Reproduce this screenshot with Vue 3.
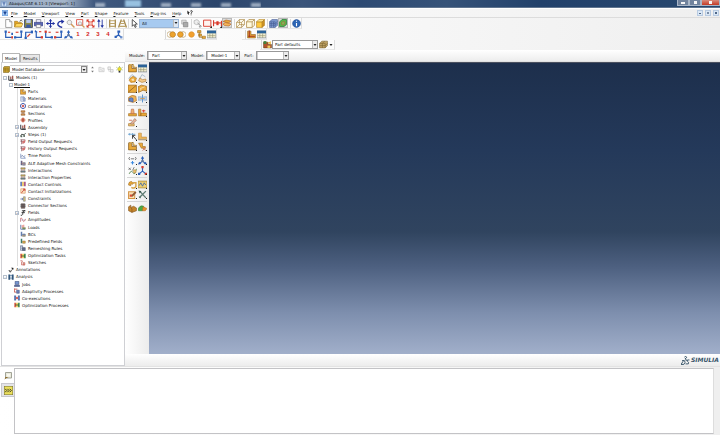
<script setup>
import { h, ref } from 'vue'

const G = '#e9a93a'
const B = '#2b5fb8'
const R = '#d8392b'
const K = '#33373d'
const part = 'M1 2H7V8H15V14H1Z'

// Each shape is [path, fill, stroke, stroke width] on a 16 x 16 grid.
const shapes = {
  app: [['M1 2H15V14H1Z', '#cfe0f3', '#4a78b8', 1], ['M4 4H12V6H9V12H7V6H4Z', '#1a3f8c']],
  menuApp: [['M0 1H16V15H0Z', '#a9cdf5', '#3a7fd0', 1.5], ['M4 4H12V7H10V12H6V7H4Z', '#123a8c']],
  fresh: [['M3 1H10L14 5V15H3Z', '#fff', '#777', 1.2], ['M10 1V5H14', '#ddd', '#777', 1]],
  open: [['M1 4H6L8 6H13V14H1Z', '#e4a424', '#9a6c14', 1], ['M1 14L4 8H16L13 14Z', '#ffd75c', '#a87a1a', 1], ['M10 4Q13 0 15 4', '', '#444', 1.4]],
  save: [['M1 1H15V15H1Z', '#8e8b48', '#3b4a72', 1.6], ['M4 1H12V7H4Z', '#b9c8f0'], ['M4 10H12V15H4Z', '#3a5aa8']],
  print: [['M4 1H12V7H4Z', '#eef', '#556', 1], ['M0 6H16V12H0Z', '#5c6ab5', '#343c80', 1], ['M4 10H12V15H4Z', '#fff', '#556', 1]],
  move: [['M8 1V15M1 8H15', '', '#2232a0', 1.8], ['M8 0L11 4H5ZM8 16L5 12H11ZM0 8L4 5V11ZM16 8L12 11V5Z', '#2232a0']],
  rotate: [['M11 15Q1 12 4 7Q6 3 12 5', '', '#2232a0', 2.4], ['M9 1L15 4L10 9Z', '#2232a0']],
  lens: [['M6 2A4 4 0 1 0 6.1 2', '#eee', '#999', 1.4], ['M9 9L15 15', '', '#d09a5a', 2.6]],
  lensBox: [['M1 1H12V11H1Z', '', R, 1.4], ['M7 5A3 3 0 1 0 7.1 5', '#eee', '#999', 1.2], ['M10 10L15 15', '', '#d09a5a', 2.4]],
  fit: [['M1 1H6L1 6ZM15 1V6L10 1ZM1 15V10L6 15ZM15 15H10L15 10Z', R], ['M2 2L14 14M14 2L2 14', '', R, 2], ['M5 5H11V11H5Z', '#f8c9c0', R, 1]],
  updown: [['M5 3V15M11 1V13', '', '#2232a0', 1.6], ['M5 0L8 5H2ZM11 16L8 11H14Z', '#2232a0']],
  ortho: [['M3 1V15M13 1V15', '', '#a58a50', 2.4], ['M3 3H13M3 8H13M3 13H13', '', '#bda46c', 2]],
  persp: [['M6 1L1 15M10 1L15 15', '', '#a58a50', 2.4], ['M5 4H11M4 8H12M2 13H14', '', '#bda46c', 2]],
  cursor: [['M4 1L13 9H9L11 14L9 15L7 10L4 13Z', '#fff', '#222', 1.3]],
  stack: [['M3 2H11V9H3Z', '#ddd', '#999', 1], ['M6 6H14V14H6Z', '#aaa', '#777', 1]],
  ghost: [['M2 3L7 1L11 4V9L6 10L2 8Z', '#eee', '#999', 1], ['M8 7L15 13H11L13 16', '#ddd', '#777', 1.1]],
  redBox: [['M1 2H14V13H1Z', '#fff3f0', R, 1.6], ['M12 16H16V12Z', '#222']],
  redArrows: [['M1 2V13M15 3V13', '', R, 2], ['M2 7H14', '', R, 2], ['M8 4V11', '', R, 4], ['M12 16H16V12Z', '#222']],
  layers: [['M0 5L6 2L16 4L11 8Z', G, '#b4601c', 1.2], ['M0 10L5 7L16 10L12 14L3 13Z', '#f4b45a', '#b4601c', 1.2]],
  wire: [['M1 6H10V15H1ZM6 1H15V10H6ZM1 6L6 1M10 6L15 1M10 15L15 10M1 15L6 10', '#fffdf2', '#a37b30', 1.1]],
  hidden: [['M1 5H11V15H1ZM1 5L5 1H15L11 5M15 1V11L11 15', '#fffae0', '#a37b30', 1.2]],
  solid: [['M1 5H11V15H1Z', '#ffca42', '#a97716', 1], ['M1 5L5 1H15L11 5Z', '#ffe795', '#a97716', 1], ['M15 1V11L11 15V5Z', '#cf9220', '#a97716', 1]],
  blueCube: [['M1 5L5 1H15V11L11 15H1Z', '#7f9ad0', '#41578e', 1], ['M1 8H11L15 4M1 11H11L15 7M4 5V15M8 5V15M1 5H11V15', '', '#41578e', 1]],
  greenCube: [['M1 6L6 1H15V11L10 15H1Z', '#55b64b', '#227a35', 1.4], ['M5 7Q8 4 12 6Q13 11 8 12Q4 12 5 7', '#7bbd54', '#b0583a', 1.2]],
  info: [['M8 1A7 7 0 1 0 8.1 1', '#2d66b5', '#1a4890', 1], ['M7 7H9V13H7ZM7 3H9V5H7Z', '#fff']],
  c1: [['M3 3V13H14', '', B, 2.2], ['M1 1H5V5H1ZM13 5H16V9H13Z', B], ['M7 4H11', '', R, 2], ['M13 11H16V15H13Z', R]],
  c2: [['M2 13H13V4', '', B, 2.2], ['M0 11H4V15H0ZM11 1H15V5H11Z', B], ['M3 4H8', '', R, 2]],
  c3: [['M3 15V4H14', '', B, 2.2], ['M1 12H5V16H1Z', B], ['M12 1H16V6H12Z', B], ['M6 12L11 7', '', R, 2]],
  c4: [['M4 3V13H15', '', B, 2.2], ['M2 0L7 4H1Z', B], ['M9 3H13', '', R, 2], ['M12 11H16V15H12Z', R]],
  c5: [['M3 3V13H14', '', B, 2.2], ['M1 1H5V5H1Z', R], ['M8 4H12', '', R, 2], ['M12 11H16V15H12Z', B]],
  c6: [['M2 13H13V4', '', B, 2.2], ['M0 11H4V15H0Z', R], ['M3 4H8', '', R, 2], ['M11 1H15V5H11Z', B]],
  tri: [['M8 2V9L2 14M8 9L14 14', '', B, 2], ['M8 0L11 5H5ZM0 15L2 10L6 14ZM16 15L10 14L14 10Z', B], ['M6 7H10V11H6Z', '#63799d']],
  triRed: [['M8 2V9L2 14M8 9L14 14', '', B, 2], ['M6 0H10V4H6ZM12 12H16V16H12Z', R], ['M0 12H4V16H0Z', B]],
  triSave: [['M8 4V9L3 12M8 9L13 13', '', B, 2.4], ['M6 1H11V5H6ZM1 10H5V14H1Z', B], ['M11 11H15V15H11Z', '#6a8fcc']],
  boolA: [['M5 3A5 5 0 1 0 5.1 3', '#fff', '#a37b30', 1], ['M10 3A5 5 0 1 0 10.1 3', '#eda32e', '#a86c17', 1]],
  boolB: [['M11 3A5 5 0 1 0 11.1 3', '#fff', '#a37b30', 1], ['M6 3A5 5 0 1 0 6.1 3', '#eda32e', '#a86c17', 1]],
  disc: [['M8 3A5 5 0 1 0 8.1 3', '#f2a02e', '#d58a26', 1]],
  tree: [['M1 1H7V5H1ZM3 7H8V11H3ZM9 11H15V15H9Z', G, '#9a6b1a', 1], ['M4 4V13H10', '', '#9a6b1a', 1.2]],
  table: [['M0 2H16V14H0Z', '#f4efcf', '#5b6a7e', 1], ['M0 1H16V6H0Z', '#2c6398'], ['M1 10H15M5 6V14M10 6V14', '', '#8d8c6c', 1]],
  partRed: [[part, G, '#8a5a18', 1], ['M4 1V13M2 11H14', '', '#a23522', 2]],
  palette: [['M1 4H9V8H15V14H1Z', '#b2542a', '#65401a', 1], ['M1 2H6V7H1Z', '#42823c'], ['M8 5L14 2V8Z', '#edbf49'], ['M8 10H13V14H8Z', '#f0ce60']],
  cubes: [['M1 6L5 2H15V10L11 14H1Z', '#bfa265', '#75602c', 1], ['M1 6H11V14M6 6V14M1 10H11L15 6M6 6L10 2', '', '#75602c', 1]],
  db: [['M1 4L3 1H15V12L13 15H1Z', '#caa22f', '#6d5713', 1.2], ['M1 5H12V14M1 9H12M5 5V14', '', '#7a6118', 1]],
  spin: [['M8 1L11 5H5ZM8 15L5 11H11Z', '#777']],
  folder: [['M2 3H7L9 5H14V13H2Z', '#eee', '#bbb', 1.2], ['M5 7L11 11', '', '#bbb', 1]],
  copy: [['M2 2H8V8H2ZM8 8H14V14H8Z', '#eee', '#b5b5b5', 1.2], ['M4 8V12H8', '', '#b5b5b5', 1]],
  bulb: [['M8 3A4 4 0 1 0 8.1 3', '#f1e32a', '#8b8d1a', 1], ['M6 11H10V15H6Z', '#333'], ['M1 3L3 4M15 3L13 4M8 0V2M1 9H3M13 9H15', '', '#668c30', 1.4]],
  models: [['M2 2V14H15', '', K, 2.6], ['M6 4H9V11H6ZM11 2H14V11H11Z', '#94433a'], ['M5 12H15V15H5Z', '#333']],
  part: [[part, G, '#7d531a', 1.2], ['M1 2L3 0H9L7 2M9 0V6H16L15 8', '#f7d37c', '#7d531a', 1]],
  material: [['M2 2H10V14H2Z', '#eef2ff', '#5c6d9a', 1.2], ['M4 4H8M4 7H8M4 10H8', '', '#5577b5', 1], ['M10 2L14 6V14H10Z', '#a2b4da', '#5c6d9a', 1]],
  calib: [['M8 1A7 7 0 1 0 8.1 1', '#d7e2fa', '#2147a3', 2], ['M4 4L12 12M12 4L4 12', '', R, 2]],
  section: [['M3 2H13V6H3ZM3 10H13V14H3Z', '#d59d55', '#8a4c25', 1.4], ['M8 6V10', '', '#8a4c25', 2]],
  profile: [['M8 1V15M1 8H15', '', '#d1745f', 2.4], ['M4 3H12V13H4Z', '#d8765f'], ['M4 8H12M8 3V13', '', '#8b3020', 1.2]],
  steps: [['M1 12Q5 2 8 7Q10 10 15 3', '', '#3a443d', 2.4], ['M2 9H6V14H2ZM9 8H13V13H9Z', '#5a6a5e']],
  output: [['M1 2H14M1 6H7M4 2V14', '', '#75434a', 1.6], ['M7 6L14 4L12 10L7 12Z', '#ed8581', '#9a3434', 1.2]],
  time: [['M2 2V14H15', '', '#5870a8', 1.6], ['M3 10L6 6L9 10L14 7', '', '#334a87', 1.4], ['M11 10H14V14H11Z', '#9aa9d1']],
  ale: [['M2 2H6V14H2Z', '#5a6890'], ['M7 7H14V14H7Z', '#96a0bd', '#444', 1], ['M3 5H8M2 10H14', '', '#bf5547', 1]],
  inter: [['M2 2H14V6H2Z', '#c3bf59', '#777', 1], ['M2 10H14V14H2Z', '#5d97a0', '#555', 1], ['M5 1V15M11 1V15', '', '#a8504a', 1.2]],
  contact: [['M1 2H5V14H1Z', '#516bae'], ['M6 2H10V14H6Z', '#e6b746'], ['M11 2H15V14H11Z', '#9c3f7a']],
  contactInit: [['M2 2H14V14H2Z', '#f9e6c3', '#d06c2e', 1.2], ['M4 13L12 3M8 3H13V8', '', '#c62e28', 2]],
  constraint: [['M1 8H8M6 5L9 8L6 11', '', '#2f478b', 1.8], ['M9 2H14V14H9Z', '#d8c57e', '#5f6a76', 1.2]],
  connector: [['M3 2H13V14H3Z', '#9c7468', '#444', 1.2], ['M1 5H15M1 9H15M6 2V14M10 2V14', '', '#424850', 1.5]],
  field: [['M14 2Q9 0 8 6L7 12Q6 15 2 14M4 7H13M5 2H14', '', '#222', 2.2]],
  amp: [['M1 13V4Q4 0 6 6T10 12T15 5', '', '#c34444', 1.6], ['M1 8H15', '', '#6b80b7', 1]],
  load: [['M2 2V14H14', '', '#42619c', 2], ['M6 3V10M10 2V10', '', R, 1.6], ['M6 9H15V14H6Z', '#7a8a5c']],
  bc: [['M2 2H6V14H2Z', '#657fae'], ['M7 8H14V14H7Z', '#8b98b6', '#43557c', 1.2], ['M5 13H15', '', '#e0a63d', 1.5]],
  predef: [['M2 2H6V14H2Z', '#3f7d68'], ['M7 8H14V14H7Z', '#e1ad4e', '#796130', 1.2]],
  remesh: [['M1 2H7V14H1Z', '#dfe4f1', '#414d70', 1.4], ['M7 7H14V15H7Z', '#66728f', '#303850', 1.2], ['M3 5H6M3 9H6', '', '#394b80', 1]],
  opt: [['M1 2H5V14H1Z', '#d64831'], ['M6 2H10V14H6Z', '#ebc13c'], ['M11 2H15V14H11Z', '#318343'], ['M3 8H13', '', '#20462c', 2]],
  sketch: [['M1 2H6V6H4V13H13', '', '#b93d34', 1.5], ['M8 7H13V13H8Z', '#eba798', '#a93d34', 1.2]],
  note: [['M2 8L6 14L14 3', '', '#222', 1.6], ['M8 2H14V8Z', '#222'], ['M3 9L7 9L6 14Z', '#222']],
  analysis: [['M1 1H6V15H1ZM10 1H15V15H10Z', '#31567c'], ['M6 4H10M6 11H10', '', '#3c6a96', 2]],
  job: [['M3 1H13V9H3Z', '#7696d2', '#30406e', 1.4], ['M1 11H15V15H1Z', '#52649b', '#30406e', 1]],
  adapt: [['M1 1V11H6M2 3H9', '', '#bd392d', 2], ['M7 6H14V14H7Z', '#7183b7', '#384a7d', 1.4]],
  coex: [['M1 2H5V14H1ZM11 2H15V14H11Z', '#5475ba', '#32508c', 1], ['M5 5L11 11M11 5L5 11', '', R, 2]],
  boxOut: [['M4 7L9 4L15 7L13 14L5 15L2 11Z', G, '#a96c20', 1], ['M1 8L7 1L14 6', '', '#9db0c2', 1.4], ['M6 9L10 8L11 12L7 12Z', '#fbe3b4']],
  arm: [['M3 9L7 1L13 5', '', '#9db0c2', 1.4], ['M3 7L8 10L14 9V13L7 15L1 12Z', '#f4c987', '#ad7a38', 1.1]],
  solidCut: [['M0 2H15V15H0Z', G, '#9a641b', 1.2], ['M1 14L14 3', '', '#80501b', 1.2]],
  blend: [['M0 5L6 2L15 4L16 13L9 11L1 15Z', G, '#9a641b', 1.2], ['M4 8L12 5M5 12V8', '', '#fbe6bd', 1.4]],
  round: [['M1 6Q7 0 14 4L15 12L9 15L1 13Z', '#f0b45a', '#a16722', 1], ['M2 8Q6 5 9 8V14L2 12Z', '#6786c8', '#35549c', 1]],
  mirror: [['M8 1V15', '', '#3a80c4', 1.4], ['M0 5H6V11H0ZM10 5H16V11H10Z', '#b9d2ee', '#7f9fc4', 1], ['M4 8H12', '', '#d99a4a', 1.4]],
  stamp: [['M1 10H15V14H1Z', G, '#9a641b', 1], ['M6 2H10L11 10H5Z', '#efb172', '#b45a36', 1]],
  stampTo: [['M1 2H5V14H1ZM5 9H15V14H5Z', G, '#9a641b', 1], ['M7 5H13M10 3V8', '', R, 1.6]],
  pencil: [['M1 10H11V14H1Z', '#f0c67a', '#9a641b', 1], ['M4 10L12 1L15 4L8 11Z', '#e6b49c', '#8a6a50', 1], ['M2 4H7', '', '#c45a44', 1.4]],
  datum: [['M0 4H13M3 2V6M8 2V6', '', '#5e9bd0', 1.4], ['M8 6L15 14M8 6V12M8 6H13', '', '#333', 1.6]],
  partLine: [['M1 2H6V9H15V14H1Z', '#f0b95a', '#b98238', 1], ['M1 13H15', '', '#8a9ab0', 1.2]],
  partX: [['M1 2H8V8H13V11H6Z', G, '#9a641b', 1], ['M8 10L14 15M14 10L8 15', '', '#c8705a', 1.6]],
  dims: [['M3 2Q0 4 3 7M13 2Q16 4 13 7M5 5H11', '', '#555', 1.4], ['M8 9V15M5 12H11', '', '#3c8ae0', 1.8]],
  xyz: [['M1 3L5 7M5 3L1 7M11 2L8 8', '', '#555', 1.3], ['M2 14Q6 6 9 12T15 5', '', '#52824c', 1.5], ['M10 7H14V12H10Z', '#f0c878', '#b98a38', 1]],
  twist: [['M1 9Q1 2 7 3L10 6L7 8Q4 5 5 10Z', G, '#9a641b', 1], ['M9 5H14V12Q11 16 6 13', '', '#d8a44a', 2.6]],
  wave: [['M0 2H16V14H0Z', '#efd073', '#a17a25', 1.2], ['M2 10L5 5L8 11L11 5L14 9', '', '#4065a5', 1.5]],
  repair: [['M1 3H12V15H1Z', '#f9e2b6', '#d39547', 1.8], ['M5 10L13 2L15 5L8 12Z', '#8f5a34'], ['M3 8H7V12H3Z', '#d84a34']],
  tools: [['M3 2L14 14M14 2L3 13', '', '#5e7b73', 2.4], ['M1 1L6 2L3 6ZM1 12L5 12L4 15Z', '#34564e']],
  bricks: [['M1 5L5 2V6L10 4L15 7V12L7 15L1 12Z', '#c6852c', '#7b511c', 1], ['M5 6L7 9V15', '', '#7b511c', 1]],
  turtle: [['M0 10Q3 1 10 4L11 9L8 12H1Z', '#4da844', '#357b31', 1], ['M9 5L16 8L13 12H8Z', '#e6942e', '#b76b1e', 1]],
  msg: [['M3 1H15V12H3Z', '#e9e9dc', '#999b8c', 1.8], ['M6 4H12V9H6Z', '#f9f8ec'], ['M1 15L3 10L9 10L5 12Z', '#8a6723']],
  cli: [['M0 0H16V16H0Z', '#ece05b', '#6d6a3b', 1.8], ['M2 5L5 8L2 11M6 5L9 8L6 11M10 5L13 8L10 11', '', '#222', 1.6]],
  helpArrow: [['M1 1L8 8H5V13L1 9Z', '#222'], ['M9 3Q14 0 14 4Q14 6 11 8V10M11 12V14', '', '#222', 2.4]],
  ds: [['M2 8H6Q9 11 5 15H0L4 9M6 2Q9 -1 10 2Q10 4 7 5Q11 6 9 9M15 7Q10 6 11 9Q15 11 13 14H8', '', '#39556a', 1.7]],
  down: [['M2 4H14L8 12Z', '#222']],
}

const Glyph = (p) =>
  h('svg', { viewBox: '0 0 16 16', class: 'glyph', 'aria-hidden': 'true' },
    shapes[p.name].map(([d, fill, stroke, w]) =>
      h('path', { d, fill: fill || 'none', stroke: stroke || 'none', 'stroke-width': w || 0 })))
Glyph.props = ['name']

const menus = ['File', 'Model', 'Viewport', 'View', 'Part', 'Shape', 'Feature', 'Tools', 'Plug-ins', 'Help']
const viewTools = [['fresh', 'open', 'save', 'print'], ['move', 'rotate', 'lens', 'lensBox', 'fit', 'updown'], ['ortho', 'persp']]
const pickTools = [['ghost', 'redBox', 'redArrows', 'layers'], ['wire', 'hidden', 'solid'], ['blueCube', 'greenCube'], ['info']]
const toolbox = [
  ['part', 'table', 'boxOut', 'arm', 'solidCut', 'blend', 'round', 'mirror'],
  ['stamp', 'stampTo', 'pencil'],
  ['datum', 'partLine', 'part', 'partX'],
  ['dims', 'tri', 'xyz', 'triRed'],
  ['twist', 'wave', 'repair', 'tools'],
  ['bricks', 'turtle'],
]
// [depth, icon, label, expander]
const rows = [
  [0, 'models', 'Models (1)', '-'], [1, '', 'Model-1', '-'],
  [2, 'part', 'Parts'], [2, 'material', 'Materials'], [2, 'calib', 'Calibrations'], [2, 'section', 'Sections'],
  [2, 'profile', 'Profiles'], [2, 'models', 'Assembly', '+'], [2, 'steps', 'Steps (1)', '+'],
  [2, 'output', 'Field Output Requests'], [2, 'output', 'History Output Requests'], [2, 'time', 'Time Points'],
  [2, 'ale', 'ALE Adaptive Mesh Constraints'], [2, 'inter', 'Interactions'], [2, 'inter', 'Interaction Properties'],
  [2, 'contact', 'Contact Controls'], [2, 'contactInit', 'Contact Initializations'], [2, 'constraint', 'Constraints'],
  [2, 'connector', 'Connector Sections'], [2, 'field', 'Fields', '+'], [2, 'amp', 'Amplitudes'], [2, 'load', 'Loads'],
  [2, 'bc', 'BCs'], [2, 'predef', 'Predefined Fields'], [2, 'remesh', 'Remeshing Rules'], [2, 'opt', 'Optimization Tasks'],
  [2, 'sketch', 'Sketches'], [0, 'note', 'Annotations'], [0, 'analysis', 'Analysis', '-'],
  [3, 'job', 'Jobs'], [3, 'adapt', 'Adaptivity Processes'], [3, 'coex', 'Co-executions'], [3, 'opt', 'Optimization Processes'],
]
const tab = ref('Model')
const log = ref('')
</script>

<template>
  <div class="window">
    <header class="title">
      <Glyph name="app" />
      <h1>Abaqus/CAE 6.11-3 [Viewport: 1]</h1>
      <div class="smears"><i></i><i class="wide"></i><i></i><i></i><i></i><i></i></div>
      <div class="caption">
        <button class="min" aria-label="Minimize"><i></i></button>
        <button class="max" aria-label="Maximize"><i></i></button>
        <button class="close" aria-label="Close"><i></i></button>
      </div>
    </header>

    <nav class="menu">
      <Glyph name="menuApp" />
      <a v-for="m in menus" :key="m" href="#"><u>{{ m[0] }}</u>{{ m.slice(1) }}</a>
      <Glyph name="helpArrow" />
      <div class="child">
        <button aria-label="Minimize viewport"><i class="low"></i></button>
        <button aria-label="Restore viewport"><i class="big"></i></button>
        <button aria-label="Close viewport"><i></i></button>
      </div>
    </nav>

    <div class="bars">
      <div class="bar">
        <div class="strip">
          <template v-for="(g, i) in viewTools" :key="i">
            <button v-for="n in g" :key="n" class="tool" :aria-label="n"><Glyph :name="n" /></button>
            <i class="sep"></i>
          </template>
          <button class="tool" aria-label="Select"><Glyph name="cursor" /></button>
          <span class="pick filter"><select aria-label="Selection filter"><option>All</option></select><b><Glyph name="down" /></b></span>
          <button class="tool" aria-label="Filter options"><Glyph name="stack" /></button>
          <template v-for="(g, i) in pickTools" :key="'p' + i">
            <i class="sep wide"></i>
            <button v-for="n in g" :key="n" class="tool" :class="{ on: n === 'layers' || n === 'greenCube' }" :aria-label="n"><Glyph :name="n" /></button>
          </template>
        </div>
      </div>
      <div class="bar">
        <div class="strip first">
          <button v-for="n in ['c1', 'c2', 'c3', 'c4', 'c5', 'c6', 'tri']" :key="n" class="tool" :aria-label="n"><Glyph :name="n" /></button>
          <button v-for="n in 4" :key="n" class="tool num">{{ n }}</button>
          <button class="tool" aria-label="Save view"><Glyph name="triSave" /></button>
        </div>
        <div class="strip second">
          <i class="sep"></i>
          <button v-for="n in ['boolA', 'boolB', 'disc', 'tree', 'table']" :key="n" class="tool" :aria-label="n"><Glyph :name="n" /></button>
        </div>
        <div class="strip third">
          <i class="sep"></i>
          <button v-for="n in ['partRed', 'table']" :key="n" class="tool" :aria-label="n"><Glyph :name="n" /></button>
        </div>
      </div>
      <div class="bar">
        <div class="strip colors">
          <i class="sep"></i>
          <button class="tool" aria-label="Color code"><Glyph name="palette" /></button>
          <span class="pick defaults"><select aria-label="Color mapping"><option>Part defaults</option></select><b><Glyph name="down" /></b></span>
          <button class="tool" aria-label="Translucency"><Glyph name="cubes" /></button>
          <button class="tool slim" aria-label="More"><Glyph name="down" /></button>
        </div>
      </div>
    </div>

    <main class="work">
      <aside class="side">
        <div class="tabs" role="tablist">
          <button v-for="t in ['Model', 'Results']" :key="t" role="tab" :class="{ active: tab === t }" @click="tab = t">{{ t }}</button>
        </div>
        <div class="panel">
          <div class="source">
            <Glyph name="db" />
            <span class="pick"><select aria-label="Tree source"><option>Model Database</option></select><b><Glyph name="down" /></b></span>
            <button v-for="n in ['spin', 'folder', 'copy', 'bulb']" :key="n" class="tool" :aria-label="n"><Glyph :name="n" /></button>
          </div>
          <ul class="tree">
            <li v-for="r in rows" :key="r[2]" :class="'d' + r[0]">
              <span class="exp" :class="{ box: r[3] }">{{ r[3] }}</span>
              <Glyph v-if="r[1]" :name="r[1]" />
              <span :class="{ current: !r[1] }">{{ r[2] }}</span>
            </li>
          </ul>
        </div>
      </aside>

      <section class="stage">
        <div class="context">
          <label for="module">Module:</label>
          <span class="pick module"><select id="module"><option>Part</option></select><b><Glyph name="down" /></b></span>
          <label for="model">Model:</label>
          <span class="pick model"><select id="model"><option>Model-1</option></select><b><Glyph name="down" /></b></span>
          <label for="part">Part:</label>
          <span class="pick partname"><select id="part"><option></option></select><b><Glyph name="down" /></b></span>
        </div>
        <div class="canvas">
          <div class="toolbox">
            <div v-for="(g, i) in toolbox" :key="i" class="group">
              <button v-for="(n, k) in g" :key="k" class="tool" :class="{ more: i + k > 1 && i < 5 }" :aria-label="n"><Glyph :name="n" /></button>
            </div>
          </div>
          <div class="viewport"></div>
        </div>
        <footer class="brand"><Glyph name="ds" /><span>SIMULIA</span></footer>
      </section>
    </main>

    <section class="console">
      <div class="modes">
        <button aria-label="Message area"><Glyph name="msg" /></button>
        <button class="lit" aria-label="Command line"><Glyph name="cli" /></button>
      </div>
      <textarea v-model="log" aria-label="Messages" readonly></textarea>
      <div class="grip"></div>
    </section>
  </div>
</template>

<style>
body { background: #f0f0f0; overflow: hidden; }
</style>

<style scoped>
* { box-sizing: border-box; }
.window {
  display: flex; flex-direction: column; height: 100vh;
  font: 4px/7px "DejaVu Sans", sans-serif; color: #111;
  background: linear-gradient(90deg, #fff, #fbfbfb 30%, #efefef);
}
button, select, textarea { font: inherit; color: inherit; margin: 0; padding: 0; border: 0; border-radius: 0; background: none; }
.glyph { display: block; width: 8px; height: 8px; flex: none; }

.title {
  display: flex; align-items: center; gap: 2px; height: 8px; padding-left: 1px; flex: none;
  background: linear-gradient(90deg, #9aaec9 0, #a4b5ca 9%, #415a80 13%, #2b456b 30%, #3b557b 42%, #2d4a73 50%, #365379 62%, #22416b 75%, #28486f 100%);
  border-bottom: 1px solid #60758f;
}
.title .glyph { width: 6px; height: 6px; }
.title h1 { margin: 0; font-size: 4px; font-weight: 400; line-height: 7px; width: 84px; white-space: nowrap; }
.smears { display: flex; align-items: flex-end; gap: 20px; height: 7px; overflow: hidden; }
.smears i { width: 10px; height: 4px; background: #e4edf5; opacity: .6; filter: blur(1px); }
.smears .wide { width: 16px; height: 7px; background: #a9d5f3; opacity: .85; }
.caption { display: flex; align-self: flex-start; margin-left: auto; height: 6px; }
.caption button { display: grid; place-items: center; width: 12px; height: 6px; border: 1px solid #a9b6c7; border-top: 0; background: #71839d; }
.caption .close { width: 19px; background: linear-gradient(#d98b7c, #c43a25); }
.caption i { width: 4px; height: 2px; background: #f6f6f6; }
.caption .max i { width: 3px; height: 3px; }
.caption .close i { width: 3px; height: 3px; }

.menu { display: flex; align-items: center; height: 10px; flex: none; padding: 0 1px 0 2px; border-bottom: 1px solid #dcdcdc; border-top: 1px solid #fff; }
.menu a { color: inherit; text-decoration: none; margin-right: 6px; }
.menu > .glyph { width: 6px; height: 6px; margin-right: 3px; }
.child { display: flex; gap: 2px; margin-left: auto; }
.child button { display: grid; place-items: center; width: 6px; height: 6px; border: 1px solid #b8cbe2; background: #dbe8f6; }
.child i { width: 2px; height: 2px; background: #4f6787; }
.child .low { height: 1px; }
.child .big { background: #7d8fa8; }

.bars { flex: none; }
.bar { display: flex; height: 11px; }
.bar:last-child { height: 10px; }
.strip { display: flex; align-items: center; background: #fcfcfc; border-right: 1px solid #dedede; border-bottom: 1px solid #e6e6e6; padding-left: 3px; }
.second { margin-left: 40px; padding-left: 0; }
.third { margin-left: 25px; padding-left: 2px; }
.colors { margin-left: 260px; padding-left: 0; }
.tool { display: grid; place-items: center; width: 10px; height: 10px; flex: none; position: relative; }
.strip .tool .glyph { width: 9px; height: 9px; }
.tool.on { background: #dcdcdc; border: 1px solid #b9b9b9; }
.strip .tool.on .glyph { width: 8px; height: 8px; }
.tool.slim { width: 6px; }
.strip .slim .glyph { width: 4px; height: 4px; }
.num { font: bold 6px/8px "Liberation Sans", sans-serif; color: #d4261c; }
.sep { width: 2px; height: 9px; border-right: 1px solid #d8d8d8; flex: none; }
.sep.wide { width: 3px; }

.pick { display: grid; grid-template-columns: 1fr 5px; height: 9px; border: 1px solid #999; background: #fff; min-width: 0; }
.pick select { grid-area: 1 / 1 / 2 / 3; appearance: none; width: 100%; height: 7px; line-height: 7px; padding-left: 2px; outline: none; }
.pick b { grid-area: 1 / 2; display: grid; place-items: center; pointer-events: none; background: #ececec; border-left: 1px solid #bbb; }
.pick .glyph { width: 4px; height: 4px; }
.filter { width: 40px; background: #a7caf0; border-color: #9bb6d6; }
.filter b { background: #dde7f3; }
.defaults { width: 46px; }

.work { display: flex; flex: 1; min-height: 0; }
.side { display: flex; flex-direction: column; width: 125px; flex: none; padding-top: 3px; }
.tabs { display: flex; align-items: flex-end; height: 9px; padding-left: 2px; flex: none; }
.tabs button { height: 8px; padding: 0 2px; border: 1px solid #b5b5b5; border-bottom: 0; background: #e8e8e8; line-height: 7px; }
.tabs .active { height: 9px; background: #fff; }
.panel { flex: 1; display: flex; flex-direction: column; min-height: 0; margin-left: 1px; border: 1px solid #cfd0d4; background: #fff; }
.source { display: flex; align-items: center; height: 11px; flex: none; padding: 1px 0 0 1px; }
.source .pick { flex: 1; grid-template-columns: 1fr 6px; border-color: #ccc; border-left: 0; height: 8px; }
.source .pick b { border: 1px solid #888; }
.source .glyph { width: 7px; height: 7px; }
.source .pick .glyph { width: 4px; height: 4px; }
.source .tool { width: 9px; }
.tree { flex: 1; display: grid; grid-auto-rows: 1fr; margin: 0; padding: 0 0 56px 1px; list-style: none; min-height: 0; }
.tree li { display: flex; align-items: center; gap: 2px; min-height: 0; white-space: nowrap; }
.tree .glyph { width: 6px; height: 6px; }
.tree .d1 { padding-left: 6px; }
.tree .d2 { padding-left: 12px; background: linear-gradient(#ddd, #ddd) 14px 0 / 1px 100% no-repeat; }
.tree .d3 { padding-left: 6px; }
.exp { width: 4px; height: 4px; flex: none; margin-right: -1px; font-size: 3px; line-height: 2px; text-align: center; color: #456; }
.box { border: 1px solid #b5bfcc; background: #fff; }
.current { text-decoration: underline; }

.stage { flex: 1; display: flex; flex-direction: column; min-width: 0; }
.context { display: flex; align-items: center; height: 12px; flex: none; padding-left: 4px; background: linear-gradient(#fff, #ededed); border-bottom: 1px solid #e2e2e2; }
.context label { margin-right: 2px; }
.context .pick { margin-right: 4px; box-shadow: inset 1px 0 #ccc; }
.context select { padding-left: 4px; }
.module { width: 40px; }
.model { width: 34px; }
.partname { width: 33px; }
.canvas { flex: 1; display: flex; min-height: 0; }
.toolbox { width: 24px; flex: none; padding: 1px 2px; background: linear-gradient(90deg, #fff, #ececec); }
.group { display: grid; grid-template-columns: 10px 10px; grid-auto-rows: 10px; row-gap: 0; padding-bottom: 2px; margin-bottom: 1px; border-bottom: 1px solid #d6d6d6; }
.group:last-child { border: 0; }
.group .glyph { width: 9px; height: 9px; }
.more::after { content: ""; position: absolute; right: 0; bottom: 0; width: 1px; height: 1px; background: #222; }
.viewport { flex: 1; border-top: 1px solid #4b5160; background: linear-gradient(#1d2f4c, #24395a 30%, #30445f 58%, #4d6080 70%, #7e8fae 86%, #a1afca); }
.brand { display: flex; align-items: center; justify-content: flex-end; height: 12px; flex: none; gap: 1px; background: linear-gradient(#fff, #ececec); color: #39556a; font: italic bold 6px/8px "DejaVu Sans", sans-serif; padding-right: 1px; }
.brand .glyph { width: 9px; height: 9px; }

.console { display: flex; height: 69px; flex: none; padding: 1px 0 1px 1px; border-top: 1px solid #e3e3e3; }
.modes { width: 13px; padding-top: 1px; }
.modes button { display: grid; place-items: center; width: 13px; height: 14px; }
.modes .lit { background: #e4e4e8; border: 1px solid #c8c8ce; border-right: 0; }
.lit .glyph { width: 9px; height: 9px; }
.console textarea { flex: 1; resize: none; outline: none; background: #fff; border: 1px solid #c3c3c6; border-right-color: #ddd; }
.grip { width: 6px; background: #efefef; }
</style>
